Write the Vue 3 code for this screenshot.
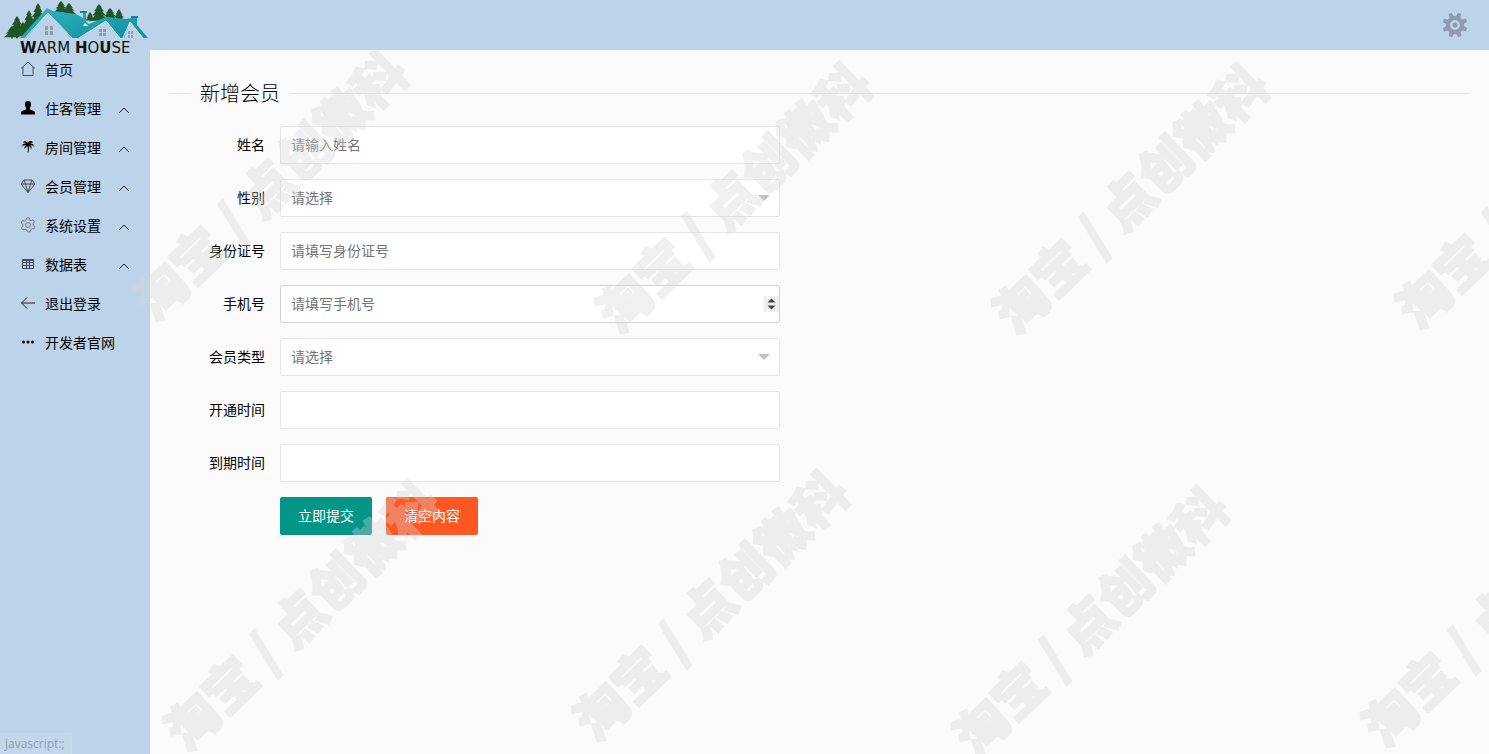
<template>
  <div class="layout">
    <header class="header">
      <a class="logo" href="#" aria-label="WARM HOUSE">
        <svg width="150" height="56" viewBox="0 0 150 56">
          <defs>
            <linearGradient id="roof" x1="0" y1="0" x2="1" y2="1">
              <stop offset="0" stop-color="#35b3bf" />
              <stop offset="1" stop-color="#0d8f9d" />
            </linearGradient>
            <path id="tree" d="M0 0L3 6L2 6L5 12L3 12L7 19L4 19L9 28L1 28L1 31L-1 31L-1 28L-9 28L-4 19L-7 19L-3 12L-5 12L-2 6L-3 6Z" />
          </defs>
          <!-- 树 -->
          <g fill="#1f5426">
            <use href="#tree" transform="translate(12 26) scale(.9 .4)" />
            <use href="#tree" transform="translate(17 16) scale(1 .72)" />
            <use href="#tree" transform="translate(23 22) scale(.8 .5)" />
            <use href="#tree" transform="translate(29 10) scale(.9 .85)" />
            <use href="#tree" transform="translate(38 3) scale(.9 .75)" />
            <use href="#tree" transform="translate(61 1) scale(.8 .4)" />
            <use href="#tree" transform="translate(69 3) scale(.8 .4)" />
            <use href="#tree" transform="translate(90 12) scale(.5 .3)" />
            <use href="#tree" transform="translate(99 4) scale(1 .6)" />
            <use href="#tree" transform="translate(110 8) scale(.9 .45)" />
            <use href="#tree" transform="translate(119 9) scale(.7 .45)" />
          </g>
          <!-- 墙 -->
          <path d="M26 38L48 12L72 38ZM80 38L106 20L120 38ZM122 38L130 21L143 38Z" fill="#bdd3ea" />
          <!-- 屋顶 -->
          <path d="M47 8L53 11L76 14L83 18V12H86V22L89 24L106 17L126 19L132 18V17H137V25L148 38H143L130 22L124 38H120L106 21L80 38H71L48 13L26 38H20Z" fill="url(#roof)" />
          <path d="M25 38L48 13L72 38M79 38L106 21L120 38M123 38L130 22L143 38" fill="none" stroke="#e2f4f8" stroke-width="1" />
          <path d="M80 12H87M131 17H138" stroke="#247f93" stroke-width="2" />
          <path d="M83 26L85 23L88 26Z" fill="#fff" />
          <!-- 窗户 -->
          <g fill="#959ba5">
            <path d="M45 26h3v4h-3zM50 26h3v4h-3zM45 31h3v4h-3zM50 31h3v4h-3z" />
            <path d="M99 29h3v3h-3zM103 29h3v3h-3zM99 33h3v3h-3zM103 33h3v3h-3z" />
            <path d="M128 31h2v3h-2zM131 31h2v3h-2zM128 35h2v3h-2zM131 35h2v3h-2z" />
          </g>
          <text x="20" y="53" class="logo-text"><tspan class="heavy">W</tspan>ARM <tspan class="heavy">H</tspan>O<tspan class="heavy">U</tspan>SE</text>
        </svg>
      </a>
      <button class="setting" type="button" aria-label="设置">
        <svg width="26" height="26" viewBox="0 0 26 26">
          <g fill="#9099ad">
            <path v-for="n in 8" :key="n" d="M10.5 6L11.3 0.5H14.7L15.5 6Z" :transform="`rotate(${n * 45 + 22} 13 13)`" />
          </g>
          <circle cx="13" cy="13" r="7" fill="none" stroke="#9099ad" stroke-width="4" />
          <circle cx="13" cy="13" r="2.5" fill="#9099ad" />
        </svg>
      </button>
    </header>

    <div class="body">
      <nav class="side">
        <a v-for="item in menus" :key="item.title" class="side-item" href="#">
          <svg class="side-icon" width="16" height="16" viewBox="0 0 16 16">
            <path :d="item.icon" :class="item.type" />
          </svg>
          <span class="side-title">{{ item.title }}</span>
          <svg v-if="item.more" class="side-arrow" width="12" height="8" viewBox="0 0 12 8">
            <path d="M1 7L6 2L11 7" class="line" />
          </svg>
        </a>
      </nav>

      <main class="content">
        <fieldset class="title">
          <legend>新增会员</legend>
        </fieldset>
        <form class="form" @submit.prevent>
          <div v-for="field in fields" :key="field.name" class="form-item">
            <label :for="field.name">{{ field.label }}</label>
            <div class="input-block">
              <select v-if="field.type === 'select'" :id="field.name" v-model="form[field.name]">
                <option value="">请选择</option>
                <option v-for="o in field.options" :key="o" :value="o">{{ o }}</option>
              </select>
              <input
                v-else
                :id="field.name"
                v-model="form[field.name]"
                :type="field.type"
                :placeholder="field.placeholder"
                autocomplete="off"
              />
              <svg v-if="field.type === 'number'" class="spin" width="15" height="16" viewBox="0 0 15 16">
                <path d="M3.500 6.500L7.500 2.500L11.500 6.500ZM3.500 9.500L7.500 13.500L11.500 9.500Z" />
              </svg>
            </div>
          </div>
          <div class="form-btns">
            <button class="btn" type="submit">立即提交</button>
            <button class="btn btn-danger" type="button" @click="clearForm">清空内容</button>
          </div>
        </form>
      </main>
    </div>

    <div class="status">javascript:;</div>

    <!-- 水印 -->
    <div class="watermark" aria-hidden="true">
      <span v-for="(m, i) in marks" :key="i" :style="{ left: m[0] + 'px', top: m[1] + 'px' }">淘宝 / 点创微科</span>
    </div>
  </div>
</template>

<script setup>
import { reactive } from "vue";

const menus = [
  { title: "首页", type: "thin", icon: "M1 7.5L8 1L15 7.5M3 6V14.5H13V6" },
  { title: "住客管理", type: "solid", more: true, icon: "M8 1C10.4 1 11.3 2.6 11 5C10.8 7 9.8 7.8 9.8 9C9.8 10.3 15 10.3 15 12.5V14.5H1V12.5C1 10.3 6.2 10.3 6.2 9C6.2 7.8 5.2 7 5 5C4.7 2.6 5.6 1 8 1Z" },
  { title: "房间管理", type: "solid", more: true, icon: "M7.5 4C6 1.5 4 2 3 3.5C4.500 3.2 5.500 3.700 6 4.500C3.500 4 2 5.500 1.500 7.500C3.500 6 5 6 6 6.300C4.500 7.200 4.200 8.500 4.700 10C5.500 8.500 6.500 7.500 7.500 7.200C8 9 8 11.500 7.500 13.500H8.500C9 11 9 9 8.700 7.200C10 7.500 10.700 8.500 11 10.500C12 8.700 11.500 7.300 10.300 6.300C12 6 13.300 6.500 14.300 8C14.300 5.500 12.500 4.300 10.300 4.500C11 3.500 12 3.200 13 3.500C11.500 1.700 9.200 1.500 8.500 3.700L8 2Z" },
  { title: "会员管理", type: "thin", more: true, icon: "M4 2H12L15 6L8 14.500L1 6ZM1 6H15M4 2L5.500 6L8 14.500L10.500 6L12 2" },
  { title: "系统设置", type: "thin pale", more: true, icon: "M6.700 1H9.300L9.700 3L11.200 3.700L13 2.700L14.500 4.800L13.200 6.300V8.500L15 9.500L14 12L12 11.700L10.500 12.800L10.300 14.800H7.500L6.700 12.900L5 12.200L3 13L1.500 10.900L2.900 9.300V7.300L1.200 6L2.300 3.600L4.500 4L6 3ZM5.500 8A2.500 2.500 0 1 0 10.500 8A2.500 2.500 0 1 0 5.500 8" },
  { title: "数据表", type: "thin", more: true, icon: "M2.500 3.500H13.500V12.500H2.500ZM2.500 4.500H13.500M2.500 6.500H13.500M2.500 9.500H13.500M6.500 3.500V12.500M9.500 3.500V12.500" },
  { title: "退出登录", type: "line", icon: "M15 8H1.500M7 2.500L1.500 8L7 13.500" },
  { title: "开发者官网", type: "solid", icon: "M2 8a1.500 1.500 0 1 0 3 0a1.500 1.500 0 1 0 -3 0M6.500 8a1.500 1.500 0 1 0 3 0a1.500 1.500 0 1 0 -3 0M11 8a1.500 1.500 0 1 0 3 0a1.500 1.500 0 1 0 -3 0" },
];

const fields = [
  { name: "name", label: "姓名", type: "text", placeholder: "请输入姓名" },
  { name: "sex", label: "性别", type: "select", options: ["男", "女"] },
  { name: "idcard", label: "身份证号", type: "text", placeholder: "请填写身份证号" },
  { name: "phone", label: "手机号", type: "number", placeholder: "请填写手机号" },
  { name: "vipType", label: "会员类型", type: "select", options: [] },
  { name: "startTime", label: "开通时间", type: "text" },
  { name: "endTime", label: "到期时间", type: "text" },
];

const form = reactive({
  name: "",
  sex: "",
  idcard: "",
  phone: "",
  vipType: "",
  startTime: "",
  endTime: "",
});

// 水印中心点
const marks = [
  [268, 184],
  [732, 196],
  [1129, 197],
  [1532, 192],
  [300, 614],
  [709, 604],
  [1089, 620],
  [1498, 610],
];

function clearForm() {
  Object.keys(form).forEach((key) => {
    form[key] = "";
  });
}
</script>

<style>
body {
  margin: 0;
  background-color: #fbfbfb;
}
</style>

<style scoped>
.layout {
  position: relative;
  display: flex;
  flex-direction: column;
  min-height: 100vh;
  overflow: hidden;
  font-family: "Noto Sans CJK SC", sans-serif;
  font-size: 14px;
  line-height: 20px;
  color: #000;
}

.header {
  display: flex;
  justify-content: space-between;
  align-items: center;
  height: 50px;
  padding-right: 21px;
  background-color: #bdd3ea;
}

.logo {
  position: relative;
  z-index: 1;
  align-self: flex-start;
  height: 50px;
}

.logo-text {
  font-family: "DejaVu Sans", sans-serif;
  font-size: 15px;
  font-weight: 400;
  fill: #111;
}

.heavy {
  font-weight: 700;
}

.setting {
  display: flex;
  padding: 0;
  border: none;
  background: none;
  cursor: pointer;
}

.body {
  flex: 1;
  display: flex;
}

.side {
  flex: none;
  width: 150px;
  background-color: #bdd3ea;
}

.side-item {
  display: flex;
  align-items: center;
  box-sizing: border-box;
  height: 39px;
  padding: 0 20px 2px;
  color: #000;
  text-decoration: none;
}

.side-icon {
  flex: none;
  margin-right: 9px;
}

.side-title {
  flex: 1;
  white-space: nowrap;
}

.side-arrow {
  margin-top: 4px;
}

.line,
.thin {
  fill: none;
  stroke: #222;
  stroke-width: 1;
}

.thin {
  stroke: #444c5c;
}

.pale {
  stroke: #70798a;
}

.solid {
  fill: #000;
}

.content {
  flex: 1;
  min-width: 0;
  padding: 28px 20px 20px;
}

.title {
  margin: 0 0 18px;
  padding: 0;
  border: none;
  border-top: 1px solid #e6e6e6;
}

.title legend {
  margin-left: 20px;
  padding: 0 10px;
  font-size: 20px;
  font-weight: 300;
  line-height: 30px;
}

.form {
  display: flex;
  flex-direction: column;
  gap: 15px;
}

.form-item {
  display: flex;
  align-items: center;
}

.form-item label {
  flex: none;
  box-sizing: border-box;
  width: 110px;
  padding: 0 15px 2px 0;
  text-align: right;
}

.input-block {
  position: relative;
  flex: 1;
  max-width: 500px;
}

.input-block input,
.input-block select {
  display: block;
  box-sizing: border-box;
  width: 100%;
  height: 38px;
  margin: 0;
  padding: 0 0 2px 10px;
  border: 1px solid #e6e6e6;
  border-radius: 2px;
  outline: none;
  background-color: #fff;
  color: #757575;
  font-family: inherit;
  font-size: 14px;
  appearance: none;
}

.input-block input[type="number"] {
  border-color: #d2d2d2;
}

.input-block input::placeholder {
  color: #757575;
}

.input-block input::-webkit-inner-spin-button {
  opacity: 0;
}

.spin {
  position: absolute;
  top: 11px;
  right: 1px;
  background-color: #efefef;
  fill: #444;
  pointer-events: none;
}

/* 下拉箭头 */
.input-block:has(select)::after {
  content: "";
  position: absolute;
  top: 16px;
  right: 10px;
  border: 6px solid transparent;
  border-top-color: #c2c2c2;
  border-bottom: none;
  pointer-events: none;
}

.form-btns {
  display: flex;
  gap: 14px;
  padding-left: 110px;
}

.btn {
  height: 38px;
  padding: 0 18px 2px;
  border: none;
  border-radius: 2px;
  background-color: #009688;
  color: #fff;
  font-family: inherit;
  font-size: 14px;
  cursor: pointer;
}

.btn-danger {
  background-color: #ff5722;
}

.status {
  position: absolute;
  left: 0;
  bottom: 0;
  padding: 0 6px 0 5px;
  border: 1px solid #cbd9ec;
  border-width: 1px 1px 0 0;
  background-color: #c3d6ec;
  color: #8f9db3;
  font-family: "Open Sans", sans-serif;
  font-size: 12px;
}

.watermark {
  position: absolute;
  inset: 0;
  overflow: hidden;
  pointer-events: none;
}

.watermark span {
  position: absolute;
  transform: translate(-50%, -50%) rotate(-44deg);
  color: #d6d6d6;
  -webkit-text-stroke: 2px #d6d6d6;
  opacity: 0.35;
  font-size: 52px;
  font-weight: 900;
  line-height: 52px;
  white-space: nowrap;
}
</style>
